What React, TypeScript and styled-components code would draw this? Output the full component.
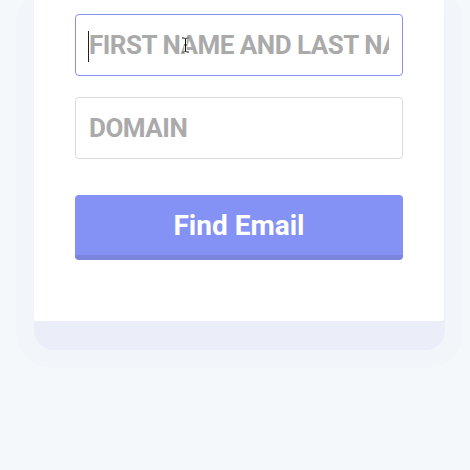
import styled, { createGlobalStyle } from 'styled-components';

const GlobalStyle = createGlobalStyle`
    html, body {
        margin: 0;
        padding: 0;
        background: #f5f8fb;
    }
    * {
        box-sizing: border-box;
    }
`;

const App = () => {
    return (
        <>
            <GlobalStyle />
            <Page>
                <Card>
                    <Field>
                        <Input placeholder="FIRST NAME AND LAST NAME" active />
                        <Caret />
                        <Cursor width="9" height="16" viewBox="0 0 9 16">
                            <path
                                d="M1 1h2.5L4.5 2l1-1H8M4.5 2v12M1 15h2.5l1-1 1 1H8M3 8h3"
                                fill="none"
                                stroke="#fff"
                                strokeWidth="2.4"
                            />
                            <path
                                d="M1 1h2.5L4.5 2l1-1H8M4.5 2v12M1 15h2.5l1-1 1 1H8M3 8h3"
                                fill="none"
                                stroke="#111"
                                strokeWidth="1"
                            />
                        </Cursor>
                    </Field>
                    <Field>
                        <Input placeholder="DOMAIN" />
                    </Field>
                    <Button>Find Email</Button>
                </Card>
            </Page>
        </>
    );
};

export default App;

const Page = styled.div`
    position: relative;
    z-index: 0;
    min-height: 470px;
    padding-left: 34px;
    display: flex;
    align-items: flex-start;
    overflow: hidden;
    background: #f5f8fb;
`;

const Card = styled.div`
    position: relative;
    width: 410px;
    padding: 14px 41px 61px;
    background: #ffffff;
    border-radius: 0 0 2px 2px;
    display: flex;
    flex-direction: column;

    &::after {
        content: '';
        position: absolute;
        z-index: -1;
        left: 0;
        right: -1px;
        top: 0;
        bottom: -29px;
        border-radius: 20px;
        background: #ebeef8;
    }

    &::before {
        content: '';
        position: absolute;
        z-index: -2;
        left: -18px;
        right: -19px;
        top: -12px;
        bottom: -47px;
        border-radius: 36px;
        background: #f2f5fa;
    }
`;

const Field = styled.div`
    position: relative;
    margin-bottom: 21px;

    &:last-of-type {
        margin-bottom: 35px;
    }
`;

const Input = styled.input<{ active?: boolean }>`
    display: block;
    width: 100%;
    height: 62px;
    padding: 0 13px;
    border: 1px solid ${({ active }) => (active ? '#8790f6' : '#dcdcdc')};
    border-radius: 4px;
    background: #ffffff;
    font-family: Roboto, 'Liberation Sans', sans-serif;
    font-size: 26px;
    letter-spacing: -0.5px;
    font-weight: 700;
    color: #555;
    outline: none;

    &::placeholder {
        color: #aaaaaa;
        opacity: 1;
    }
`;

const Caret = styled.span`
    position: absolute;
    left: 13px;
    top: 17px;
    width: 1px;
    height: 31px;
    background: #222;
    pointer-events: none;
`;

const Cursor = styled.svg`
    position: absolute;
    left: 106px;
    top: 23px;
    pointer-events: none;
`;

const Button = styled.button`
    height: 65px;
    width: 100%;
    margin-top: 1px;
    border: none;
    border-bottom: 5px solid #7a85dd;
    border-radius: 4px;
    background: #8492f5;
    color: #ffffff;
    font-family: Roboto, 'Liberation Sans', sans-serif;
    font-size: 28px;
    font-weight: 700;
    padding: 0;
    cursor: pointer;
`;
